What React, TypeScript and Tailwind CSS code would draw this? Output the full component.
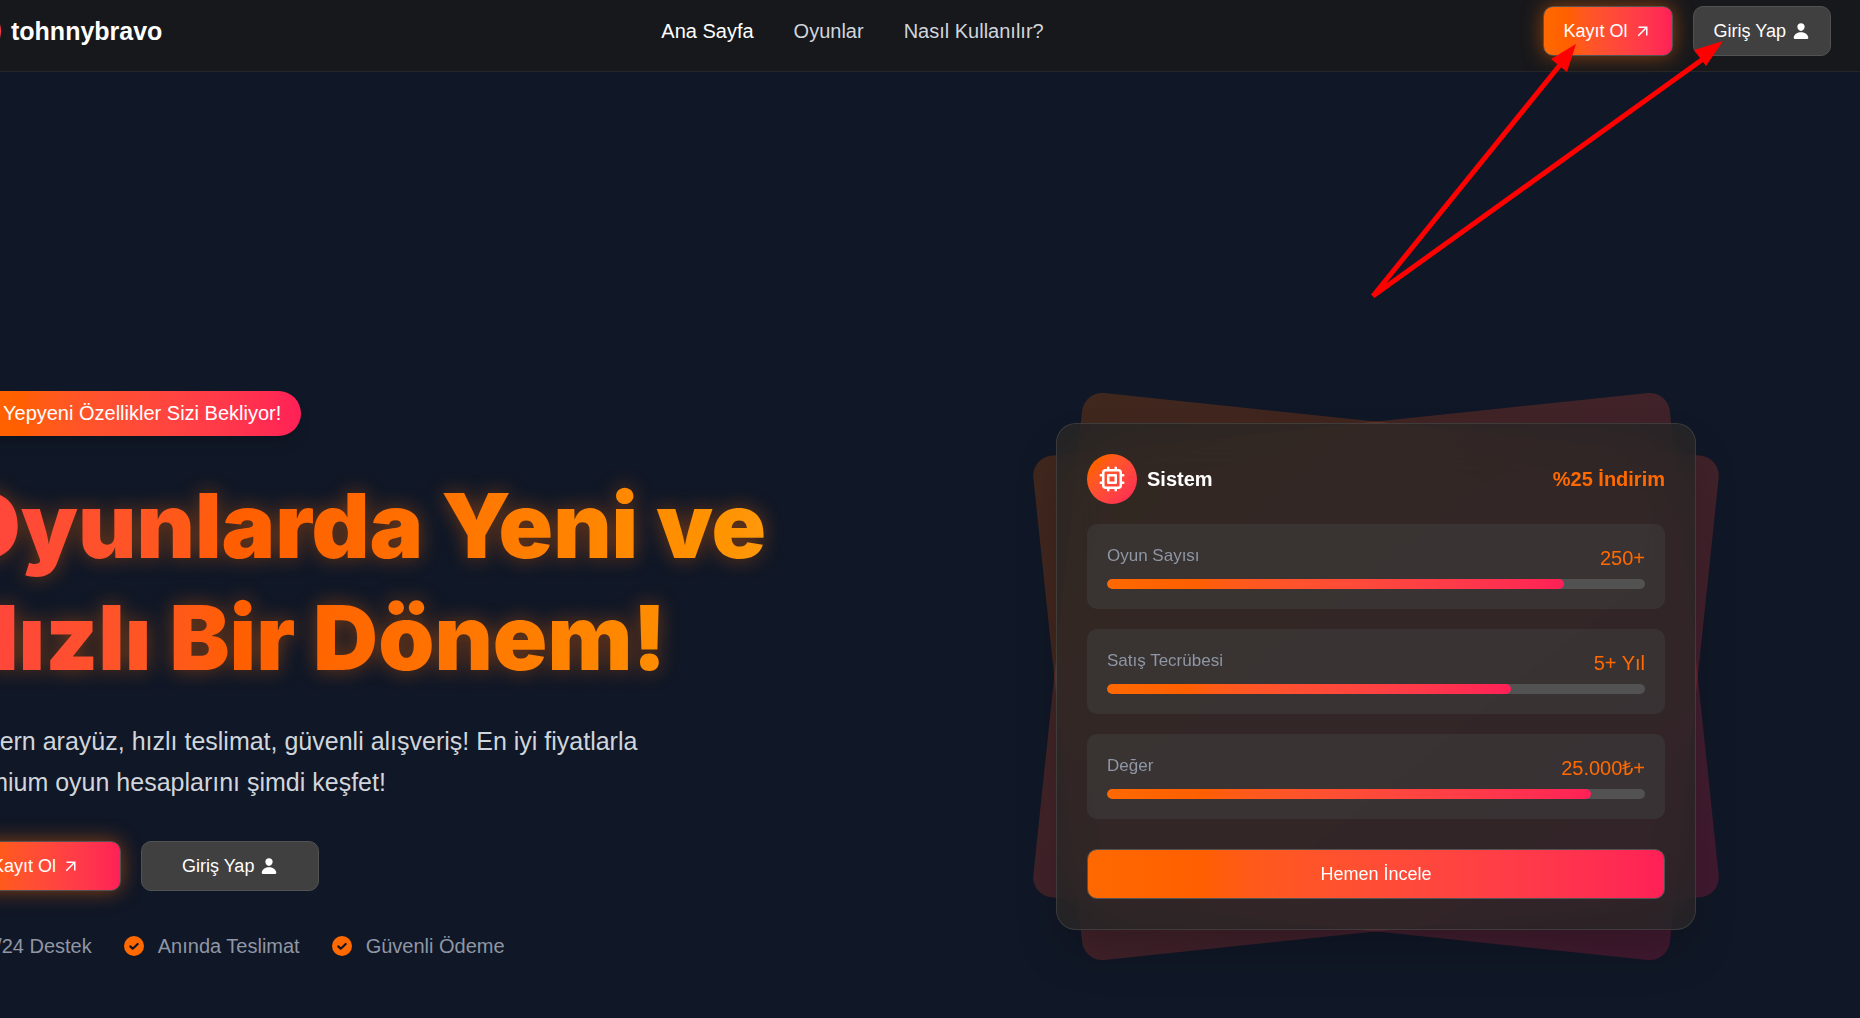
import type { ReactNode } from "react"
import { MdArrowOutward } from "react-icons/md"
import { IoPerson, IoGameController } from "react-icons/io5"

const navLinks = [
  { label: "Ana Sayfa", href: "#", active: true },
  { label: "Oyunlar", href: "#oyunlar", active: false },
  { label: "Nasıl Kullanılır?", href: "#nasil-kullanilir", active: false },
]

const stats = [
  { label: "Oyun Sayısı", value: "250+", percent: 85 },
  { label: "Satış Tecrübesi", value: "5+ Yıl", percent: 75 },
  { label: "Değer", value: "25.000₺+", percent: 90 },
]

const features = ["7/24 Destek", "Anında Teslimat", "Güvenli Ödeme"]

type ActionButtonProps = {
  variant: "primary" | "secondary"
  wide?: boolean
  children: ReactNode
}

function ActionButton({ variant, wide = false, children }: ActionButtonProps) {
  const color =
    variant === "primary"
      ? "bg-gradient-to-r from-orange-500 to-rose-500 shadow-[0_0_20px_rgba(255,105,0,0.5)]"
      : "bg-neutral-700"

  return (
    <button
      type="button"
      className={`flex h-[50px] items-center gap-1.5 rounded-[10px] border border-neutral-600 text-lg text-white ${color} ${wide ? "px-10" : "px-5"}`}
    >
      {children}
    </button>
  )
}

function ChipIcon() {
  return (
    <svg
      viewBox="0 0 24 24"
      className="size-[30px]"
      fill="none"
      stroke="currentColor"
      strokeWidth="2"
      strokeLinecap="round"
      strokeLinejoin="round"
      aria-hidden="true"
    >
      <path d="M9 3v2m6-2v2M9 19v2m6-2v2M5 9H3m2 6H3m18-6h-2m2 6h-2M7 19h10a2 2 0 002-2V7a2 2 0 00-2-2H7a2 2 0 00-2 2v10a2 2 0 002 2zM9 9h6v6H9V9z" />
    </svg>
  )
}

function CheckIcon() {
  return (
    <svg viewBox="0 0 20 20" className="size-5" aria-hidden="true">
      <circle cx="10" cy="10" r="10" fill="#ff6900" />
      <path
        d="M6.3 10.4l2.4 2.3 5-4.7"
        fill="none"
        stroke="#101626"
        strokeWidth="2.2"
        strokeLinecap="round"
        strokeLinejoin="round"
      />
    </svg>
  )
}

function Header() {
  return (
    <header className="border-b border-neutral-800 bg-[#17181b]">
      <div className="mr-[29px] -ml-[49px] flex items-center justify-between pt-1.5 pb-[15px]">
        <a href="#" className="flex items-center gap-2.5">
          <span className="flex size-[50px] items-center justify-center rounded-full bg-gradient-to-br from-orange-500 to-rose-500 text-white">
            <IoGameController className="size-7" />
          </span>
          <span className="text-[25px] leading-8 font-bold text-white">tohnnybravo</span>
        </a>

        <nav className="flex items-center gap-10">
          {navLinks.map((link) => (
            <a
              key={link.label}
              href={link.href}
              className={link.active ? "text-xl text-white" : "text-xl text-gray-300"}
            >
              {link.label}
            </a>
          ))}
        </nav>

        <div className="flex items-center gap-5">
          <ActionButton variant="primary">
            Kayıt Ol <MdArrowOutward className="size-[18px]" />
          </ActionButton>
          <ActionButton variant="secondary">
            Giriş Yap <IoPerson className="size-[18px]" />
          </ActionButton>
        </div>
      </div>
    </header>
  )
}

function HeroText() {
  return (
    <div className="flex flex-col items-start">
      <div className="flex h-[45px] items-center gap-2 rounded-full bg-gradient-to-r from-orange-500 to-rose-500 px-5 pb-0.5 text-xl whitespace-nowrap text-white shadow-lg">
        <span className="w-6">🔥</span>
        Yepyeni Özellikler Sizi Bekliyor!
      </div>

      <h1 className="mt-[34px] bg-gradient-to-r from-[#ff4140] via-orange-500 to-[#ff980c] bg-clip-text font-['Inter'] text-[90px] leading-[112px] font-black whitespace-nowrap text-transparent drop-shadow-[0_0_10px_rgba(255,105,0,0.4)]">
        Oyunlarda Yeni ve
        <br />
        Hızlı Bir Dönem!
      </h1>

      <p className="mt-[27px] max-w-[720px] text-[25px] leading-[41px] text-gray-300">
        Modern arayüz, hızlı teslimat, güvenli alışveriş! En iyi fiyatlarla premium oyun hesaplarını şimdi keşfet!
      </p>

      <div className="mt-[38px] flex gap-5">
        <ActionButton variant="primary" wide>
          Kayıt Ol <MdArrowOutward className="size-[18px]" />
        </ActionButton>
        <ActionButton variant="secondary" wide>
          Giriş Yap <IoPerson className="size-[18px]" />
        </ActionButton>
      </div>

      <ul className="mt-10 flex gap-8">
        {features.map((feature) => (
          <li key={feature} className="flex items-center gap-3.5 text-xl leading-[30px] text-[#8f96a4]">
            <CheckIcon />
            {feature}
          </li>
        ))}
      </ul>
    </div>
  )
}

function SystemCard() {
  return (
    <div className="relative w-full max-w-[640px]">
      {/* Tilted cards behind */}
      <div className="absolute inset-0 rotate-6 rounded-[20px] bg-gradient-to-br from-orange-500 to-rose-500 opacity-20" />
      <div className="absolute inset-0 -rotate-6 rounded-[20px] bg-gradient-to-br from-orange-500 to-rose-500 opacity-20" />

      <div className="relative rounded-[20px] border border-neutral-600/50 bg-neutral-800/80 p-[30px] shadow-2xl backdrop-blur-xl">
        <div className="flex items-center justify-between">
          <div className="flex items-center gap-2.5">
            <span className="flex size-[50px] items-center justify-center rounded-full bg-gradient-to-br from-orange-500 to-rose-500 text-white">
              <ChipIcon />
            </span>
            <h2 className="text-xl font-bold text-white">Sistem</h2>
          </div>
          <span className="text-xl font-bold text-orange-500">%25 İndirim</span>
        </div>

        <div className="mt-5 flex flex-col gap-5">
          {stats.map((stat) => (
            <div key={stat.label} className="rounded-[10px] bg-neutral-700/50 p-5">
              <div className="mb-[7px] flex justify-between">
                <span className="text-[17px] leading-6 text-[#8f96a4]">{stat.label}</span>
                <span className="text-xl leading-7 text-orange-500">{stat.value}</span>
              </div>
              <div
                className="h-2.5 overflow-hidden rounded-full bg-neutral-600"
                role="progressbar"
                aria-label={stat.label}
                aria-valuenow={stat.percent}
                aria-valuemin={0}
                aria-valuemax={100}
              >
                <div
                  className="h-full rounded-full bg-gradient-to-r from-orange-500 to-rose-500"
                  style={{ width: `${stat.percent}%` }}
                />
              </div>
            </div>
          ))}
        </div>

        <button
          type="button"
          className="mt-[30px] h-[50px] w-full rounded-[10px] border border-neutral-600 bg-gradient-to-r from-orange-500 to-rose-500 text-lg text-white"
        >
          Hemen İncele
        </button>
      </div>
    </div>
  )
}

function PointerArrows() {
  return (
    <svg
      viewBox="0 0 500 310"
      className="pointer-events-none absolute top-0 right-0 h-[310px] w-[500px]"
      fill="#ff0000"
      stroke="#ff0000"
      aria-hidden="true"
    >
      <path d="M204 60L13 296L350 54" fill="none" strokeWidth="5" strokeLinejoin="bevel" />
      <path d="M216 44L191 59L207 72Z" stroke="none" />
      <path d="M363 41L334 50L346 66Z" stroke="none" />
    </svg>
  )
}

export default function App() {
  return (
    <div className="relative min-h-screen overflow-hidden bg-[#101726] font-['Liberation_Sans',Arial,sans-serif]">
      <Header />
      <main className="mr-[29px] -ml-[49px] grid grid-cols-2 items-center gap-[60px] pt-[319px] pb-14">
        <HeroText />
        <div className="flex justify-center">
          <SystemCard />
        </div>
      </main>
      <PointerArrows />
    </div>
  )
}
